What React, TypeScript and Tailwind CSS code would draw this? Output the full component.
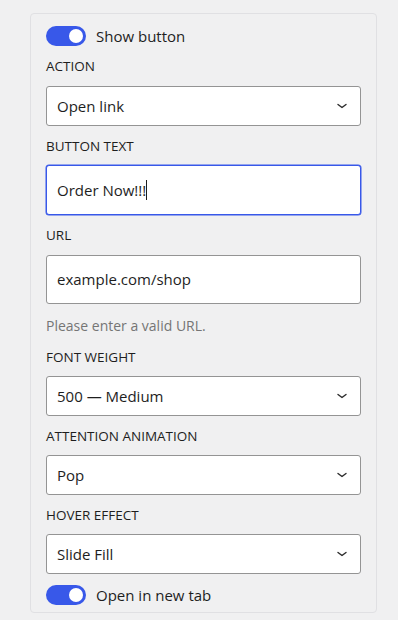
import React from 'react';

const Toggle = ({ label }: { label: string }) => (
  <div className="flex items-center h-5">
    <div className="w-10 h-5 rounded-full bg-[#3858e9] relative shrink-0">
      <div className="absolute right-[3px] top-[3px] w-[14px] h-[14px] rounded-full bg-white" />
    </div>
    <span className="ml-[10px] text-[15px] text-[#1e1e1e]">{label}</span>
  </div>
);

const Label = ({ children, className = '' }: { children: React.ReactNode; className?: string }) => (
  <div className={`text-[13.5px] leading-[18px] uppercase text-[#1e1e1e] ${className}`}>{children}</div>
);

const Chevron = () => (
  <svg width="12" height="8" viewBox="0 0 12 8" fill="none" className="shrink-0">
    <path d="M2 2.5 L6 5.5 L10 2.5" stroke="#2c2c2c" strokeWidth="1.4" strokeLinecap="round" strokeLinejoin="round" />
  </svg>
);

const Select = ({ value, className = '' }: { value: string; className?: string }) => (
  <div className={`h-10 flex items-center justify-between pl-[10px] pr-[12px] bg-white border border-[#949494] rounded-[3px] ${className}`}>
    <span className="text-[15px] text-[#1e1e1e]">{value}</span>
    <Chevron />
  </div>
);

export default function App() {
  return (
    <div className="w-[398px] h-[620px] bg-[#f0f0f1] pt-[13px] pl-[30px]" style={{ fontFamily: '"Open Sans", "Noto Sans", sans-serif' }}>
      <div className="w-[347px] h-[600px] border border-[#e0e0e3] rounded-[4px] px-[15px] pt-[12px]">
        <Toggle label="Show button" />

        <Label className="mt-[11px]">Action</Label>
        <Select value="Open link" className="mt-[11px]" />

        <Label className="mt-[11px]">Button text</Label>
        <div className="mt-[10px] h-[50px] flex items-center pl-[10px] bg-white border border-[#3858e9] rounded-[3px] shadow-[0_0_0_0.5px_#3858e9]">
          <span className="text-[15px] text-[#1e1e1e]">Order Now!!!</span>
          <span className="w-px h-[20px] bg-[#1e1e1e]" />
        </div>

        <Label className="mt-[11px]">URL</Label>
        <div className="mt-[11px] h-[49px] flex items-center pl-[10px] bg-white border border-[#949494] rounded-[3px]">
          <span className="text-[15px] text-[#1e1e1e]">example.com/shop</span>
        </div>
        <div className="mt-[13px] text-[14px] leading-[18px] text-[#757575]">Please enter a valid URL.</div>

        <Label className="mt-[13px]">Font weight</Label>
        <Select value="500 — Medium" className="mt-[10px]" />

        <Label className="mt-[11px]">Attention animation</Label>
        <Select value="Pop" className="mt-[10px]" />

        <Label className="mt-[11px]">Hover effect</Label>
        <Select value="Slide Fill" className="mt-[10px]" />

        <div className="mt-[11px]">
          <Toggle label="Open in new tab" />
        </div>
      </div>
    </div>
  );
}
